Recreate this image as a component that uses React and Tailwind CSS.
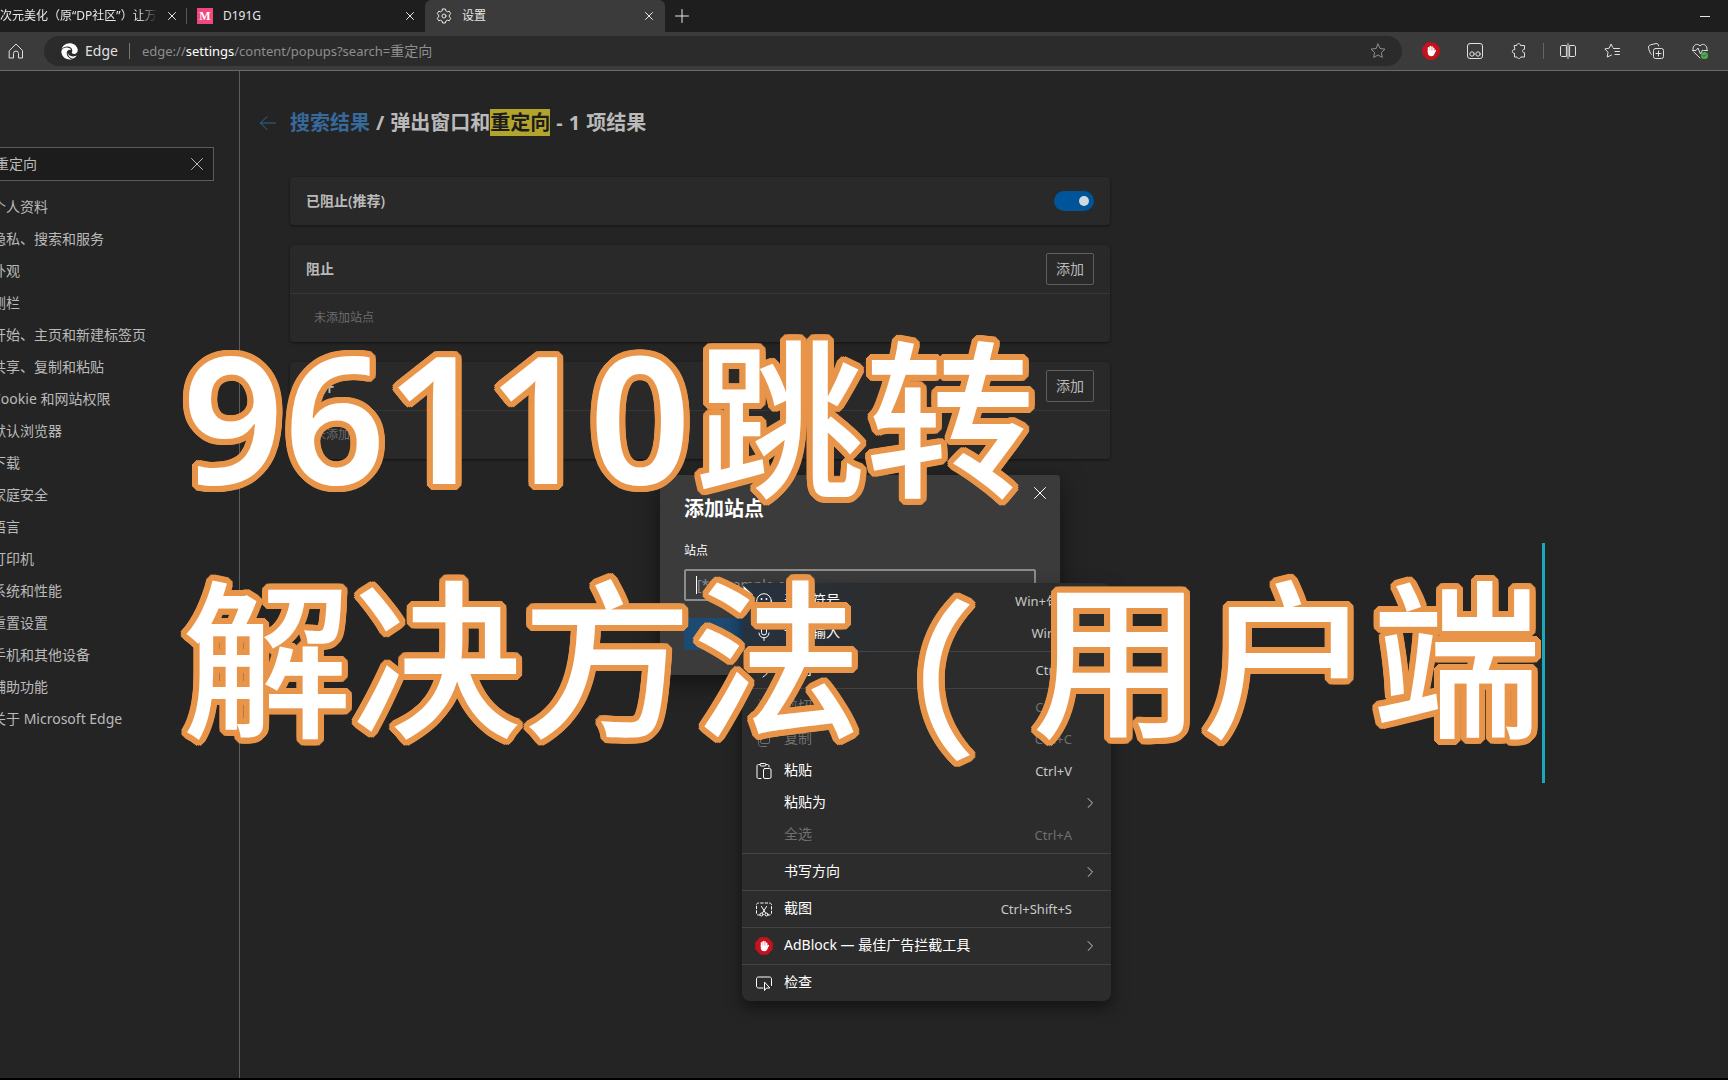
import React from "react";

const sidebarItems = [
  "个人资料", "隐私、搜索和服务", "外观", "侧栏", "开始、主页和新建标签页", "共享、复制和粘贴",
  "Cookie 和网站权限", "默认浏览器", "下载", "家庭安全", "语言", "打印机", "系统和性能",
  "重置设置", "手机和其他设备", "辅助功能", "关于 Microsoft Edge",
];

function Icon({ size = 16, children, className = "", width = 1 }) {
  return (
    <svg width={size} height={size} viewBox={`0 0 ${size} ${size}`} fill="none" stroke="currentColor"
      strokeWidth={width} strokeLinecap="round" strokeLinejoin="round" className={`shrink-0 ${className}`} aria-hidden="true">
      {children}
    </svg>
  );
}

const CloseIcon = ({ size = 8, width = 1 }) => (
  <Icon size={size} width={width}><path d={`M.5 .5L${size - 0.5} ${size - 0.5}M${size - 0.5} .5L.5 ${size - 0.5}`} /></Icon>
);

const GearIcon = () => (
  <Icon>
    <path d="M6.6 1h2.8l.5 1.9 1.5.9 1.9-.6 1.4 2.5-1.4 1.4v1.8l1.4 1.4-1.4 2.5-1.9-.6-1.5.9-.5 1.9H6.6l-.5-1.9-1.5-.9-1.9.6-1.4-2.5 1.4-1.4V7.100L1.300 5.700l1.400-2.500 1.900.6 1.500-.9z" />
    <circle cx="8" cy="8" r="2" />
  </Icon>
);

const HandIcon = () => (
  <Icon size={18} className="text-white">
    <path d="M5.600 .8h6.800l4.800 4.800v6.800l-4.800 4.800H5.600L.8 12.400V5.600z" fill="#c4121f" stroke="#c4121f" />
    <path d="M6.500 9.500V5.800M8.200 8.500V4.500M10 8.500V4.800M11.700 9.500V6.200" strokeWidth="1.500" />
    <path d="M5.800 8.500h6.600l.9-.6c.6-.2 1 .3.700.8l-1.600 3.300c-.6 1.500-1.500 2.200-3 2.200-2.200 0-3.600-1.200-3.600-3.200z" fill="currentColor" stroke="none" />
  </Icon>
);

const ToolButton = ({ label, children }) => (
  <button aria-label={label} className="flex w-11 h-8 items-center justify-center">{children}</button>
);

const Chevron = () => <Icon size={10} className="text-[#c8c8c8]"><path d="M3 .5L7.500 5L3 9.500" /></Icon>;

const icons = {
  emoji: (<Icon><circle cx="8" cy="8" r="7.300" /><path d="M4.800 9.500c1.500 2.600 4.900 2.600 6.400 0" /><path d="M5.500 6h.1M10.400 6h.1" strokeWidth="1.800" /></Icon>),
  mic: (<Icon><rect x="5.500" y="1" width="5" height="9" rx="2.500" /><path d="M3 8c0 6.500 10 6.500 10 0M8 13v2.500" /></Icon>),
  undo: (<Icon><path d="M3 2v5h5M3 7c3-5 10-4 10 1 0 2-1 3-6 7" /></Icon>),
  cut: (<Icon><path d="M3.500 1l7 10M12.500 1l-7 10" /><circle cx="4" cy="13" r="2" /><circle cx="12" cy="13" r="2" /></Icon>),
  copy: (<Icon><rect x="4.500" y=".5" width="9" height="12" rx="1.500" /><path d="M4.500 2.500c-1 0-2 .6-2 2v8c0 2 1 3 3 3h5" /></Icon>),
  paste: (<Icon><path d="M5 15.500H2.500c-.8 0-1.500-.6-1.500-1.500V3c0-.8.6-1.500 1.500-1.500H4M10 1.500h1.500c.8 0 1.500.6 1.500 1.500v1" /><rect x="4" y=".5" width="6" height="2.500" rx="1.200" /><rect x="7.500" y="5.500" width="7.500" height="10" rx="1.500" /></Icon>),
  shot: (<Icon><path d="M4 14H2.500C1.400 14 .5 13.400.5 12.500V4C.5 2.800 1.300 2 2.500 2h11c1.200 0 2 .8 2 2v8.500c0 .9-.9 1.500-2 1.500H12" strokeDasharray="2.500 2" /><path d="M5.500 5.500l4 6.500M10.500 5.500l-4 6.500" /><circle cx="5.500" cy="13.500" r="1.500" /><circle cx="10.500" cy="13.500" r="1.500" /></Icon>),
  hand: <HandIcon />,
  inspect: (<Icon><path d="M7 13H2.500c-1.200 0-2-.8-2-2V4c0-1.200.8-2 2-2h11c1.200 0 2 .8 2 2v6.500" /><path d="M8.500 7.500v8l2-2.500h3z" /></Icon>),
};

const menuGroups = [
  [
    { label: "表情符号", keys: "Win+句号", icon: "emoji" },
    { label: "语音输入", keys: "Win+H", icon: "mic" },
  ],
  [{ label: "撤消", keys: "Ctrl+Z", icon: "undo" }],
  [
    { label: "剪切", keys: "Ctrl+X", icon: "cut", off: true },
    { label: "复制", keys: "Ctrl+C", icon: "copy", off: true },
    { label: "粘贴", keys: "Ctrl+V", icon: "paste" },
    { label: "粘贴为", sub: true },
    { label: "全选", keys: "Ctrl+A", off: true },
  ],
  [{ label: "书写方向", sub: true }],
  [{ label: "截图", keys: "Ctrl+Shift+S", icon: "shot" }],
  [{ label: "AdBlock — 最佳广告拦截工具", icon: "hand", sub: true }],
  [{ label: "检查", icon: "inspect" }],
];

function TabStrip() {
  return (
    <header className="flex h-8 items-center overflow-hidden bg-[#1e1e1e] text-xs text-[#e8e8e8]">
      <div className="flex w-[187px] shrink-0 items-center justify-between border-r border-[#555] pr-[10px]">
        <span className="w-[157px] overflow-hidden whitespace-nowrap [mask-image:linear-gradient(to_right,black_88%,transparent)]">次元美化（原“DP社区”）让万物</span>
        <button aria-label="关闭标签页"><CloseIcon /></button>
      </div>
      <div className="flex w-[238px] shrink-0 items-center gap-[10px] pl-[10px] pr-[11px]">
        <span className="flex size-4 items-center justify-center bg-[#f0487c] font-['Liberation_Serif',serif] text-xs font-bold text-white">M</span>
        <span className="flex-1">D191G</span>
        <button aria-label="关闭标签页"><CloseIcon /></button>
      </div>
      <div className="flex h-8 w-60 shrink-0 items-center gap-[10px] rounded-t-md bg-[#3b3b3b] pl-[11px] pr-[12px]">
        <GearIcon />
        <span className="flex-1">设置</span>
        <button aria-label="关闭标签页"><CloseIcon /></button>
      </div>
      <button aria-label="新建标签页" className="ml-[10px]"><Icon size={14}><path d="M7 .5v13M.5 7h13" /></Icon></button>
      <button aria-label="最小化" className="ml-auto mr-[18px]"><Icon size={10}><path d="M0 5.500h10" /></Icon></button>
    </header>
  );
}

function Toolbar() {
  return (
    <div className="flex h-[39px] items-center border-b border-[#6a6a6a] bg-[#3b3b3b] text-[#e0e0e0]">
      <button aria-label="主页" className="ml-2"><Icon><path d="M1.500 7.500L8 1l6.500 6.500v7.500h-4v-4.500a2.500 2.500 0 0 0-5 0V15h-4z" /></Icon></button>
      <div className="ml-5 flex h-[30px] flex-1 items-center rounded-full bg-[#2b2b2b] pl-[17px] pr-4 text-[13px]">
        <svg width="17" height="17" viewBox="0 0 17 17" fill="white" aria-hidden="true">
          <path d="M8.500.3C12.500.2 15.800 2.600 16.600 6c.7 3-1.300 5-3.500 5-1.500 0-2.300-.7-2.300-1.400 0-.6.5-1 .5-1.900C11.300 5.200 9 3.600 6.200 3.600 3.800 3.600 1.700 4.700.6 6.200 1.500 2.800 4.700.4 8.500.3z" />
          <path d="M.4 8.300C.6 6 3 4.500 5.900 4.600c2 0 3.700 1 4.200 2.200-2.600-.7-4.400.9-4.400 3.200 0 3 2.400 5.600 5.400 6.300C5.300 17.700 0 13.700.4 8.300z" />
          <path d="M6.800 9.500c.1 2.400 2.500 4 5.200 3.900 1.600 0 3-.5 3.800-1.100-1 2-2.700 3.300-4.200 3.200-2.700-.2-5-3.200-4.800-6z" />
        </svg>
        <span className="ml-[7px] text-sm">Edge</span>
        <span className="ml-[11px] mr-3 h-4 w-px bg-[#777]" />
        <button aria-label="地址栏" className="flex-1 text-left text-[#8e8e8e]">edge://<span className="text-white">settings</span>/content/popups?search=<span className="text-sm">重定向</span></button>
        <button aria-label="收藏" className="text-[#8e8e8e]"><Icon><path d="M8 1l2.100 4.500 4.900.6-3.600 3.400.9 4.900L8 12l-4.300 2.400.9-4.900L1 6.100l4.900-.6z" /></Icon></button>
      </div>
      <div className="ml-[7px] mr-[6px] flex items-center">
        <ToolButton label="AdBlock"><HandIcon /></ToolButton>
        <ToolButton label="扩展"><Icon><rect x=".5" y=".5" width="15" height="15" rx="2.500" /><circle cx="5" cy="11" r="2.200" /><circle cx="11" cy="11" r="2.200" /></Icon></ToolButton>
        <ToolButton label="扩展管理"><Icon><path d="M3.500 2.500h2.300c-.3-2.600 4-2.600 3.700 0h4v3.800c-2.600-.4-2.600 3.800 0 3.500V14H9.700c0 2-3.700 2-3.700 0H3.500v-3.700c-3 .2-3-4 0-3.800z" /></Icon></ToolButton>
        <span className="mx-[2px] h-4 w-px bg-[#666]" />
        <ToolButton label="分屏"><Icon><path d="M6 2.500H2c-.8 0-1.500.7-1.500 1.500v8c0 .8.700 1.500 1.500 1.500h4zM10 2.500h4c.8 0 1.500.7 1.500 1.500v8c0 .8-.7 1.500-1.500 1.500h-4zM8 .5v15" /></Icon></ToolButton>
        <ToolButton label="收藏夹"><Icon><path d="M9.500 5.500H15.500M11 8.500h4.500M11 11.500h4.500M8.700 4.300L7 1 5.200 5.200.8 5.900 4 9.200l-.8 4.900L7.500 12" /></Icon></ToolButton>
        <ToolButton label="集锦"><Icon><rect x="5.500" y="5.500" width="10" height="10" rx="2" /><path d="M10.500 8v5M8 10.500h5M3.500 11.500C2 10.500.5 6 .5 4 .5 2.500 2 2 3 1.700l5-1.200c1.500-.2 2.300.6 2.700 2.500" /></Icon></ToolButton>
        <ToolButton label="浏览器概要">
          <Icon><path d="M8 15L1.800 9M1 6.500C.3 2 5.500-.5 8 3c2.500-3.500 7.700-1 7 3.500M.5 7.500h3.500L6 5l2.500 6L10.500 7l1 .5h4" /><circle cx="12.500" cy="12.500" r="3.500" fill="#4caf50" stroke="none" /><path d="M11 12.500l1 1 2-2" stroke="#1d5c21" /></Icon>
        </ToolButton>
      </div>
    </div>
  );
}

function Sidebar() {
  return (
    <aside className="w-60 shrink-0 overflow-hidden border-r border-[#5c5c5c] pt-[76px] text-sm text-[#bababa]">
      <div className="mr-[25px] flex h-[34px] items-center border border-l-0 border-[#5c5c5c] bg-[#1c1c1c] pr-[10px]">
        <input aria-label="搜索设置" defaultValue="重定向" className="-ml-[5px] min-w-0 flex-1 bg-transparent outline-none" />
        <button aria-label="清除"><CloseIcon size={12} /></button>
      </div>
      <nav className="-ml-2 mt-[10px] flex flex-col">
        {sidebarItems.map((item) => (
          <a key={item} href="#settings" className="flex h-8 items-center whitespace-nowrap">{item}</a>
        ))}
      </nav>
    </aside>
  );
}

function SiteCard({ title }) {
  return (
    <section className="rounded-sm bg-[#292929] shadow-[0_1px_3px_rgba(0,0,0,0.5)]">
      <div className="flex h-[49px] items-center justify-between border-b border-[#363636] px-4">
        <h2 className="text-sm font-semibold">{title}</h2>
        <button className="h-8 w-12 rounded-xs border border-[#5e5e5e] text-sm">添加</button>
      </div>
      <p className="flex h-12 items-center px-6 text-xs text-[#6c6c6c]">未添加站点</p>
    </section>
  );
}

function Settings() {
  return (
    <main className="flex-1 pl-5 pt-9 text-[#bababa]">
      <div className="flex h-8 items-center">
        <button aria-label="返回" className="text-[#2f6690]"><Icon><path d="M15.500 8H.5M7 1.500L.5 8L7 14.500" /></Icon></button>
        <h1 className="ml-[14px] flex gap-[6px] whitespace-nowrap text-xl font-bold">
          <a href="#results" className="text-[#37699a]">搜索结果</a>
          <span>/</span>
          <span>弹出窗口和<mark className="bg-[#b3a42c] text-[#1c1c1c]">重定向</mark></span>
          <span>-</span>
          <span>1</span>
          <span>项结果</span>
        </h1>
      </div>
      <div className="ml-[30px] mt-[38px] flex max-w-[820px] flex-col gap-5">
        <section className="flex h-12 items-center justify-between rounded-sm bg-[#292929] px-4 shadow-[0_1px_3px_rgba(0,0,0,0.5)]">
          <label htmlFor="blocked" className="text-sm font-semibold">已阻止(推荐)</label>
          <input id="blocked" type="checkbox" role="switch" defaultChecked
            className="flex h-5 w-10 appearance-none items-center justify-end rounded-full bg-[#00549a] pr-[5px] before:size-[10px] before:rounded-full before:bg-[#d0d8e0]" />
        </section>
        <SiteCard title="阻止" />
        <SiteCard title="允许" />
      </div>
    </main>
  );
}

function AddSiteDialog() {
  return (
    <div role="dialog" aria-labelledby="dialog-title" className="absolute left-[660px] top-[475px] h-[200px] w-[400px] rounded-sm bg-[#3b3b3b] px-6 text-white shadow-[0_8px_24px_rgba(0,0,0,0.5)]">
      <button aria-label="关闭" className="absolute right-[14px] top-3"><CloseIcon size={12} /></button>
      <h2 id="dialog-title" className="mt-5 text-xl leading-7 font-bold">添加站点</h2>
      <label htmlFor="site" className="mt-5 block text-xs leading-4">站点</label>
      <div className="mt-[10px] flex h-8 items-center rounded-xs border-2 border-[#8c8c8c] px-[10px]">
        <span className="h-[18px] w-px bg-white" />
        <input id="site" placeholder="[*.]example.com" className="w-full bg-transparent text-sm outline-none placeholder:text-[#8c8c8c]" />
      </div>
      <button aria-label="添加" className="mt-[17px] h-8 w-[170px] rounded-xs bg-[#1c4a70]" />
    </div>
  );
}

function ContextMenu() {
  return (
    <div role="menu" className="absolute left-[742px] top-[583px] w-[369px] rounded-lg bg-[#2c2c2c] bg-[linear-gradient(to_right,#26323f,#2c2c2c)] bg-[length:150px_70px] bg-no-repeat py-[2px] shadow-[0_6px_16px_rgba(0,0,0,0.5)]">
      {menuGroups.map((group, i) => (
        <div key={i} className={i ? "mt-[2px] border-t border-[#434343] pt-[2px]" : ""}>
          {group.map((item) => (
            <button key={item.label} role="menuitem" disabled={item.off}
              className="flex h-8 w-full items-center pl-[13px] pr-4 text-sm text-white disabled:text-[#6f6f6f]">
              <span className="mr-[11px] flex w-[18px] justify-center">{icons[item.icon]}</span>
              <span className="pb-[2px]">{item.label}</span>
              <span className={item.off ? "ml-auto text-[13px]" : "ml-auto text-[13px] text-[#c8c8c8]"}>{item.keys}</span>
              <span className="ml-[13px] flex w-[10px]">{item.sub && <Chevron />}</span>
            </button>
          ))}
        </div>
      ))}
    </div>
  );
}

function Caption() {
  return (
    <div className="pointer-events-none absolute left-[182px] top-[303px] text-[170px] leading-[217px] font-['Noto_Sans_CJK_SC',sans-serif] font-medium whitespace-nowrap text-white [text-shadow:6px_0_#e8954a,6px_2px_#e8954a,5px_3px_#e8954a,4px_4px_#e8954a,3px_5px_#e8954a,2px_6px_#e8954a,0_6px_#e8954a,-2px_6px_#e8954a,-3px_5px_#e8954a,-4px_4px_#e8954a,-5px_3px_#e8954a,-6px_2px_#e8954a,-6px_0_#e8954a,-6px_-2px_#e8954a,-5px_-3px_#e8954a,-4px_-4px_#e8954a,-3px_-5px_#e8954a,-2px_-6px_#e8954a,0_-6px_#e8954a,2px_-6px_#e8954a,3px_-5px_#e8954a,4px_-4px_#e8954a,5px_-3px_#e8954a,6px_-2px_#e8954a]">
      <p className="flex h-60 gap-1"><span className="font-['Noto_Sans',sans-serif] text-[178px] leading-[225px] font-semibold">96110</span>跳转</p>
      <p className="flex h-60 w-max">
        <span>解决方法</span>
        <span className="flex w-[170px] justify-center pr-6 pt-5 [font-feature-settings:'halt']">（</span>
        <span>用户端</span>
        <span className="h-60 w-[3px] bg-[#19a9bd]" />
      </p>
    </div>
  );
}

export default function App() {
  return (
    <div className="relative flex min-h-screen flex-col overflow-hidden bg-[#242424] font-['Noto_Sans','Noto_Sans_CJK_SC',sans-serif]">
      <TabStrip />
      <Toolbar />
      <div className="flex flex-1 border-b-2 border-black">
        <Sidebar />
        <Settings />
      </div>
      <AddSiteDialog />
      <ContextMenu />
      <svg width="13" height="19" viewBox="0 0 13 19" className="absolute left-[742px] top-[584px]" aria-hidden="true">
        <path d="M1 1v14.500l3.500-3.300 2.300 5.300 2.200-1-2.300-5.200H12z" fill="white" stroke="#222" strokeWidth=".8" />
      </svg>
      <Caption />
    </div>
  );
}
